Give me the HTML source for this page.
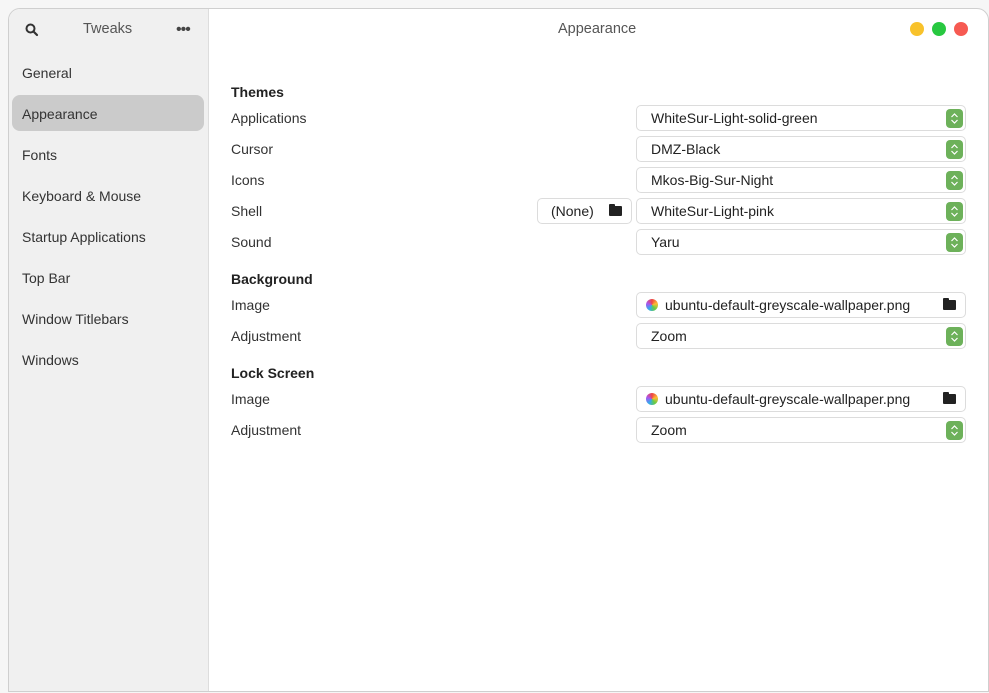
<!DOCTYPE html>
<html><head><style>
body{margin:0;width:989px;height:693px;background:#f6f6f6;font-family:"Liberation Sans",sans-serif;font-size:14px;color:#333;position:relative;overflow:hidden}
.win{position:absolute;left:8px;top:8px;width:979px;height:682px;background:#fff;border:1px solid #cfcfcf;border-radius:12px 12px 0 0;overflow:hidden}
.side{position:absolute;left:0;top:0;width:199px;height:100%;background:#f0f0f0;border-right:1px solid #ddd}
.t{position:absolute;white-space:nowrap}
.nav{position:absolute;left:13px;}
.sel{position:absolute;left:3px;top:86px;width:192px;height:36px;background:#cbcbcb;border-radius:8px}
.box{position:absolute;left:627px;width:328px;height:24px;border:1px solid #dcdcdc;border-radius:5px;background:#fff}
.box span{position:absolute;left:14px;top:4px;color:#222}
.gb{position:absolute;right:2px;top:3px;width:17px;height:19px;background:#6db15a;border-radius:4px}
.gb svg{position:absolute;left:4px;top:3px}
.h{font-weight:bold;color:#222}
.fo{position:absolute;right:9px;top:7px;width:13px;height:10px;background:#222;border-radius:1px}
.fo:before{content:"";position:absolute;left:0;top:-2px;width:6px;height:3px;background:#222;border-radius:1px 1px 0 0}
.ic{position:absolute;left:9px;top:6px;width:12px;height:12px;border-radius:50%;background:conic-gradient(#e44,#fb3,#6c4,#3ae,#a5e,#e44)}
.dot{position:absolute;top:13px;width:14px;height:14px;border-radius:50%}
</style></head><body>
<div class="win">
<div class="side">
<svg class="t" style="left:16px;top:14px" width="14" height="14" viewBox="0 0 14 14"><circle cx="5.5" cy="5.5" r="4" fill="none" stroke="#333" stroke-width="2"/><path d="M8.5 8.5L12 12" stroke="#333" stroke-width="2.2" stroke-linecap="round"/></svg>
<div class="t" style="left:74px;top:12px;color:#555;font-size:14.5px">Tweaks</div>
<div class="t" style="left:167px;top:12px;color:#444;font-size:16px;letter-spacing:-1px">•••</div>
<div class="sel"></div>
<div class="t nav" style="top:56px">General</div>
<div class="t nav" style="top:97px">Appearance</div>
<div class="t nav" style="top:138px">Fonts</div>
<div class="t nav" style="top:179px">Keyboard &amp; Mouse</div>
<div class="t nav" style="top:220px">Startup Applications</div>
<div class="t nav" style="top:261px">Top Bar</div>
<div class="t nav" style="top:302px">Window Titlebars</div>
<div class="t nav" style="top:343px">Windows</div>
</div>
<div class="t" style="left:549px;top:12px;color:#555;font-size:14.5px">Appearance</div>
<div class="dot" style="left:901px;background:#f8c22b"></div>
<div class="dot" style="left:923px;background:#28c840"></div>
<div class="dot" style="left:945px;background:#f65a52"></div>

<div class="t h" style="left:222px;top:75px">Themes</div>
<div class="t" style="left:222px;top:101px">Applications</div>
<div class="t" style="left:222px;top:132px">Cursor</div>
<div class="t" style="left:222px;top:163px">Icons</div>
<div class="t" style="left:222px;top:194px">Shell</div>
<div class="t" style="left:222px;top:225px">Sound</div>
<div class="t h" style="left:222px;top:262px">Background</div>
<div class="t" style="left:222px;top:288px">Image</div>
<div class="t" style="left:222px;top:319px">Adjustment</div>
<div class="t h" style="left:222px;top:356px">Lock Screen</div>
<div class="t" style="left:222px;top:382px">Image</div>
<div class="t" style="left:222px;top:413px">Adjustment</div>

<div class="box" style="left:528px;width:93px;top:189px"><span style="left:13px">(None)</span><div class="fo"></div></div>

<div class="box" style="top:96px"><span>WhiteSur-Light-solid-green</span><div class="gb"><svg width="9" height="13"><path d="M1.5 5L4.5 2L7.5 5M1.5 8L4.5 11L7.5 8" fill="none" stroke="#fff" stroke-width="1.2"/></svg></div></div>
<div class="box" style="top:127px"><span>DMZ-Black</span><div class="gb"><svg width="9" height="13"><path d="M1.5 5L4.5 2L7.5 5M1.5 8L4.5 11L7.5 8" fill="none" stroke="#fff" stroke-width="1.2"/></svg></div></div>
<div class="box" style="top:158px"><span>Mkos-Big-Sur-Night</span><div class="gb"><svg width="9" height="13"><path d="M1.5 5L4.5 2L7.5 5M1.5 8L4.5 11L7.5 8" fill="none" stroke="#fff" stroke-width="1.2"/></svg></div></div>
<div class="box" style="top:189px"><span>WhiteSur-Light-pink</span><div class="gb"><svg width="9" height="13"><path d="M1.5 5L4.5 2L7.5 5M1.5 8L4.5 11L7.5 8" fill="none" stroke="#fff" stroke-width="1.2"/></svg></div></div>
<div class="box" style="top:220px"><span>Yaru</span><div class="gb"><svg width="9" height="13"><path d="M1.5 5L4.5 2L7.5 5M1.5 8L4.5 11L7.5 8" fill="none" stroke="#fff" stroke-width="1.2"/></svg></div></div>
<div class="box" style="top:283px"><div class="ic"></div><span style="left:28px">ubuntu-default-greyscale-wallpaper.png</span><div class="fo"></div></div>
<div class="box" style="top:314px"><span>Zoom</span><div class="gb"><svg width="9" height="13"><path d="M1.5 5L4.5 2L7.5 5M1.5 8L4.5 11L7.5 8" fill="none" stroke="#fff" stroke-width="1.2"/></svg></div></div>
<div class="box" style="top:377px"><div class="ic"></div><span style="left:28px">ubuntu-default-greyscale-wallpaper.png</span><div class="fo"></div></div>
<div class="box" style="top:408px"><span>Zoom</span><div class="gb"><svg width="9" height="13"><path d="M1.5 5L4.5 2L7.5 5M1.5 8L4.5 11L7.5 8" fill="none" stroke="#fff" stroke-width="1.2"/></svg></div></div>
</div>
</body></html>
